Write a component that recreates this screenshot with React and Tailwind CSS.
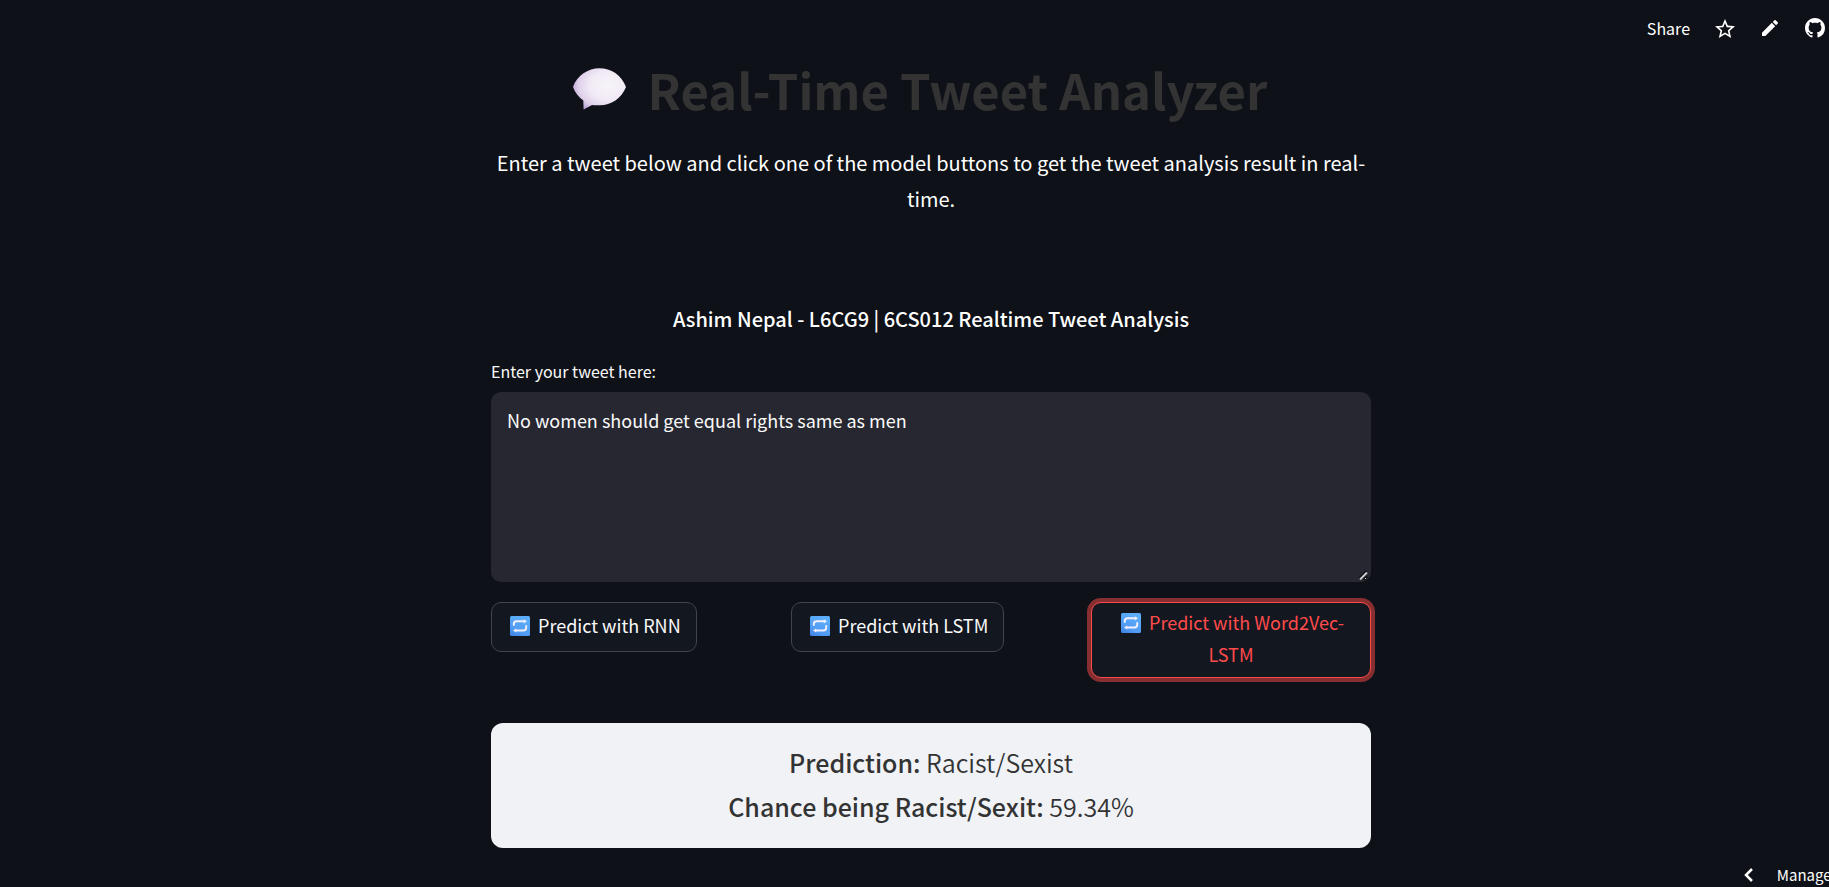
import { useState } from "react";

const ui = "font-['Noto_Sans_CJK_SC','Noto_Sans',sans-serif]";

function SpeechBubble() {
  return (
    <svg viewBox="0 0 53 42" className="h-[42px] w-[53px] shrink-0" aria-hidden="true">
      <defs>
        <radialGradient id="bubble" cx="0.66" cy="0.42" r="0.7">
          <stop offset="0" stopColor="#f7f4f9" />
          <stop offset="0.5" stopColor="#f1eaf6" />
          <stop offset="0.8" stopColor="#dfd0ea" />
          <stop offset="1" stopColor="#b9a3d6" />
        </radialGradient>
      </defs>
      <path d="M26.500 0.300C38 0.300 48.500 7 53 19C48.500 30.500 38 37.300 27 37.300C24 37.300 21 37.200 19 37L10.600 41.400L10.300 32.500C5.500 29 2 24.500 0 19C4 7.500 15 0.300 26.500 0.300Z" fill="url(#bubble)" />
    </svg>
  );
}

function RepeatEmoji() {
  return (
    <svg viewBox="0 0 20 20" className="mr-2 ml-[3px] inline-block size-5 align-[-3px]" aria-hidden="true">
      <defs>
        <linearGradient id="tile" x1="0" y1="1" x2="0.5" y2="0">
          <stop offset="0" stopColor="#3f7fe0" />
          <stop offset="0.35" stopColor="#519bf3" />
          <stop offset="1" stopColor="#5caefa" />
        </linearGradient>
      </defs>
      <rect width="20" height="20" rx="1.500" fill="url(#tile)" />
      <g fill="none" stroke="#f3f0fb" strokeWidth="1.900" strokeLinecap="round" strokeLinejoin="round">
        <path d="M3.800 9V8Q3.800 5.300 6.500 5.300H14" />
        <path d="M16.200 10V11.800Q16.200 14.500 13.500 14.500H6" />
      </g>
      <path d="M13.800 3.200L17 5.300L13.800 7.400Z M6.200 12.400L3 14.500L6.200 16.600Z" fill="#f3f0fb" />
    </svg>
  );
}

function Toolbar() {
  return (
    <header className="flex h-14 items-center justify-end pr-[37px] text-white">
      <button type="button" className="text-[16px] leading-6">Share</button>
      <button type="button" aria-label="Favorite" className="ml-[25px]">
        <svg viewBox="2 2 20 19" className="h-[19px] w-5" fill="currentColor">
          <path d="M22 9.240l-7.190-.62L12 2 9.190 8.630 2 9.240l5.460 4.730L5.820 21 12 17.270 18.180 21l-1.630-7.030L22 9.240zM12 15.400l-3.760 2.270 1-4.280-3.320-2.880 4.380-.38L12 6.100l1.710 4.040 4.380.38-3.320 2.880 1 4.280L12 15.400z" />
        </svg>
      </button>
      <button type="button" aria-label="Edit source" className="ml-[27px]">
        <svg viewBox="3 3 18 18" className="size-4" fill="currentColor">
          <path d="M3 17.250V21h3.750L17.810 9.940l-3.750-3.750L3 17.250zM20.710 7.040a1 1 0 0 0 0-1.410l-2.340-2.340a1 1 0 0 0-1.410 0l-1.830 1.830 3.750 3.750 1.830-1.830z" />
        </svg>
      </button>
      <button type="button" aria-label="View on GitHub" className="ml-[27px]">
        <svg viewBox="0 0 16 16" className="size-5" fill="currentColor">
          <path d="M8 0C3.580 0 0 3.580 0 8c0 3.540 2.290 6.530 5.470 7.590.4.070.55-.17.55-.38 0-.19-.01-.82-.01-1.490-2.010.37-2.530-.49-2.690-.94-.09-.23-.48-.94-.82-1.130-.28-.15-.68-.52-.01-.53.63-.01 1.080.58 1.230.82.72 1.210 1.870.87 2.330.66.07-.52.28-.87.51-1.070-1.780-.2-3.640-.89-3.640-3.950 0-.87.31-1.590.82-2.150-.08-.2-.36-1.020.08-2.120 0 0 .67-.21 2.200.82.64-.18 1.320-.27 2-.27s1.360.09 2 .27c1.530-1.040 2.200-.82 2.200-.82.44 1.100.16 1.920.08 2.120.51.56.82 1.270.82 2.150 0 3.070-1.870 3.750-3.650 3.950.29.25.54.73.54 1.480 0 1.070-.01 1.930-.01 2.200 0 .21.15.46.55.38A8.010 8.010 0 0 0 16 8c0-4.420-3.580-8-8-8z" />
        </svg>
      </button>
    </header>
  );
}

function PredictButton({ children, active = false }) {
  const tone = active
    ? "border-[#ff4b4b] text-[#ff4b4b] ring-4 ring-[#ff4b4b]/50"
    : "border-[#41444c] text-[#fafafa]";
  return (
    <button
      type="button"
      className={`min-h-[50px] rounded-[10px] border bg-[#131720] px-[15px] pt-[3px] pb-[7px] text-[18px] leading-8 ${tone}`}
    >
      <RepeatEmoji />
      {children}
    </button>
  );
}

export default function App() {
  const [tweet, setTweet] = useState("No women should get equal rights same as men");
  return (
    <div className={`min-h-screen overflow-hidden bg-[#0e1117] text-[#fafafa] ${ui}`}>
      <div className="-mr-[33px] flex min-h-screen flex-col">
        <Toolbar />
        <main className="mx-auto w-full max-w-[880px]">
          <h1 className="flex items-center justify-center gap-[22px] pr-[22px] text-[49px] leading-[66px] font-bold text-[#333333]">
            <SpeechBubble />
            Real-Time Tweet Analyzer
          </h1>
          <p className="mt-[23px] text-center text-[20px] leading-9 text-white">
            Enter a tweet below and click one of the model buttons to get the tweet analysis result in real-time.
          </p>
          <h2 className="mt-[84px] text-center text-[20px] leading-9 font-medium text-white">
            Ashim Nepal - L6CG9 | 6CS012 Realtime Tweet Analysis
          </h2>
          <label htmlFor="tweet" className="mt-5 block text-[16px] leading-7">
            Enter your tweet here:
          </label>
          <div className="relative mt-[7px]">
            <textarea
              id="tweet"
              value={tweet}
              onChange={(e) => setTweet(e.target.value)}
              className="block h-[190px] w-full resize-y rounded-[10px] bg-[#262730] px-4 py-[14px] text-[18px] leading-7 text-[#fafafa] outline-none [&::-webkit-resizer]:bg-transparent"
            />
            <svg viewBox="0 0 12 12" className="pointer-events-none absolute right-px bottom-px size-3" fill="none" aria-hidden="true">
              <path d="M1 9.500L8.500 2M6 10.500L9 7.500" stroke="#0e1117" strokeWidth="2" />
              <path d="M2 10.500L9 3.500" stroke="#c8c8ca" strokeWidth="2" />
              <path d="M7 10L8 9" stroke="#c8c8ca" strokeWidth="1" />
            </svg>
          </div>
          <div className="mt-5 grid grid-cols-3 items-start justify-items-start gap-5">
            <PredictButton>Predict with RNN</PredictButton>
            <PredictButton>Predict with LSTM</PredictButton>
            <PredictButton active>Predict with Word2Vec-LSTM</PredictButton>
          </div>
          <section className="mt-[45px] rounded-[12px] bg-[#f0f2f6] px-5 pt-[17px] pb-5 text-center text-[25px] leading-[44px] font-[350] text-[#333333]">
            <p><strong className="font-medium">Prediction:</strong> Racist/Sexist</p>
            <p><strong className="font-medium">Chance being Racist/Sexit:</strong> 59.34%</p>
          </section>
        </main>
        <footer className="mt-auto flex justify-end">
          <button type="button" className="flex items-center gap-6 text-[15px] leading-6 whitespace-nowrap text-white">
            <svg viewBox="0 0 9 14" className="h-[14px] w-[9px]" fill="none" stroke="currentColor" strokeWidth="2.500" aria-hidden="true">
              <path d="M8 1L2 7L8 13" />
            </svg>
            Manage app
          </button>
        </footer>
      </div>
    </div>
  );
}
